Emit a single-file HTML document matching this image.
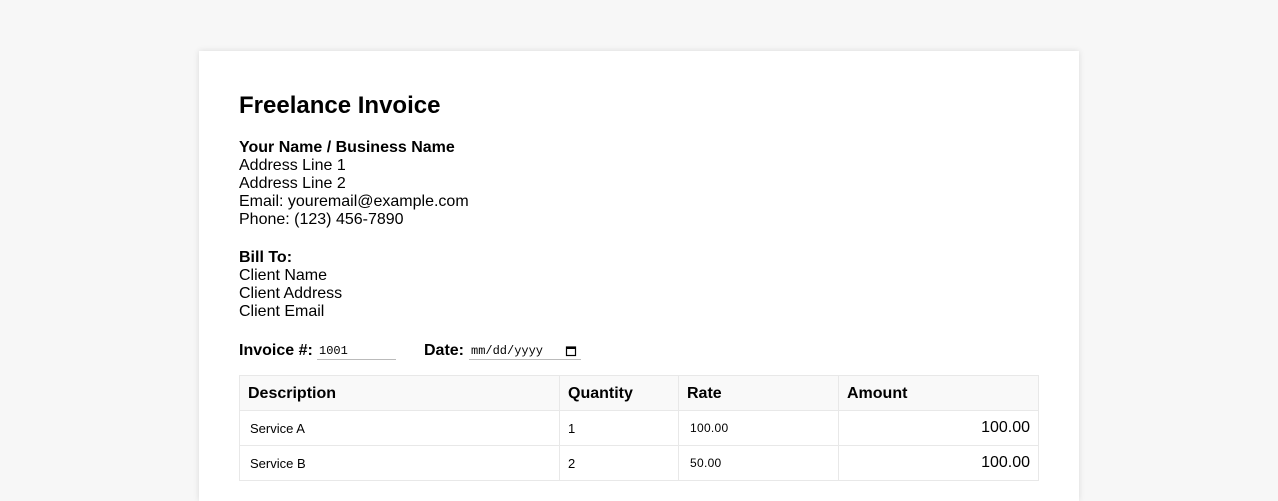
<!DOCTYPE html>
<html><head><style>
html,body{margin:0;height:501px;overflow:hidden}
body{background:#f7f7f7;font-family:"Liberation Sans",Arial,sans-serif;color:#000;width:1278px;position:relative}
.card{position:absolute;left:199px;top:51px;width:880px;height:450px;background:#fff;box-shadow:0 0 6px rgba(0,0,0,0.12)}
.a{position:absolute;white-space:nowrap}
h1{position:absolute;left:40px;top:41px;margin:0;font-size:24px;line-height:28px;font-weight:bold}
.blk{position:absolute;left:40px;font-size:16px;line-height:18px}
table{position:absolute;left:40px;top:324px;width:800px;border-collapse:collapse}
td,th{border:1px solid #e8e8e8;height:34px;padding:0 8px;text-align:left}
th{background:#f9f9f9;font-size:16px;font-weight:bold;padding-top:1px;height:33px}
td{font-size:13px}
td.r{text-align:right;font-size:16px}
.mono{font-size:12px;letter-spacing:0.3px}
.inp{position:absolute;border-bottom:1px solid #bbb;height:17px;font-family:"Liberation Mono",monospace;font-size:12px;line-height:19px}
</style></head><body>
<div class="card">
<h1>Freelance Invoice</h1>
<div class="blk" style="top:88px"><b>Your Name / Business Name</b><br>Address Line 1<br>Address Line 2<br>Email: youremail@example.com<br>Phone: (123) 456-7890</div>
<div class="blk" style="top:198px"><b>Bill To:</b><br>Client Name<br>Client Address<br>Client Email</div>
<div class="a" style="left:40px;top:291px;font-size:16px;font-weight:bold">Invoice #:</div>
<div class="inp" style="left:118px;top:291px;width:77px;padding-left:2px">1001</div>
<div class="a" style="left:225px;top:291px;font-size:16px;font-weight:bold">Date:</div>
<div class="inp" style="left:270px;top:291px;width:110px;padding-left:2px">mm/dd/yyyy<svg style="position:absolute;left:96px;top:3px" width="12" height="12" viewBox="0 0 12 12"><rect x="1.5" y="2" width="9" height="8.5" fill="none" stroke="#000" stroke-width="1.2"/><rect x="1.5" y="2" width="9" height="2" fill="#000"/></svg></div>
<table>
<tr><th style="width:303px">Description</th><th style="width:102px">Quantity</th><th style="width:143px">Rate</th><th>Amount</th></tr>
<tr><td style="padding-left:10px">Service A</td><td>1</td><td class="mono" style="padding-left:11px">100.00</td><td class="r">100.00</td></tr>
<tr><td style="padding-left:10px">Service B</td><td>2</td><td class="mono" style="padding-left:11px">50.00</td><td class="r">100.00</td></tr>
</table>
</div>
</body></html>
